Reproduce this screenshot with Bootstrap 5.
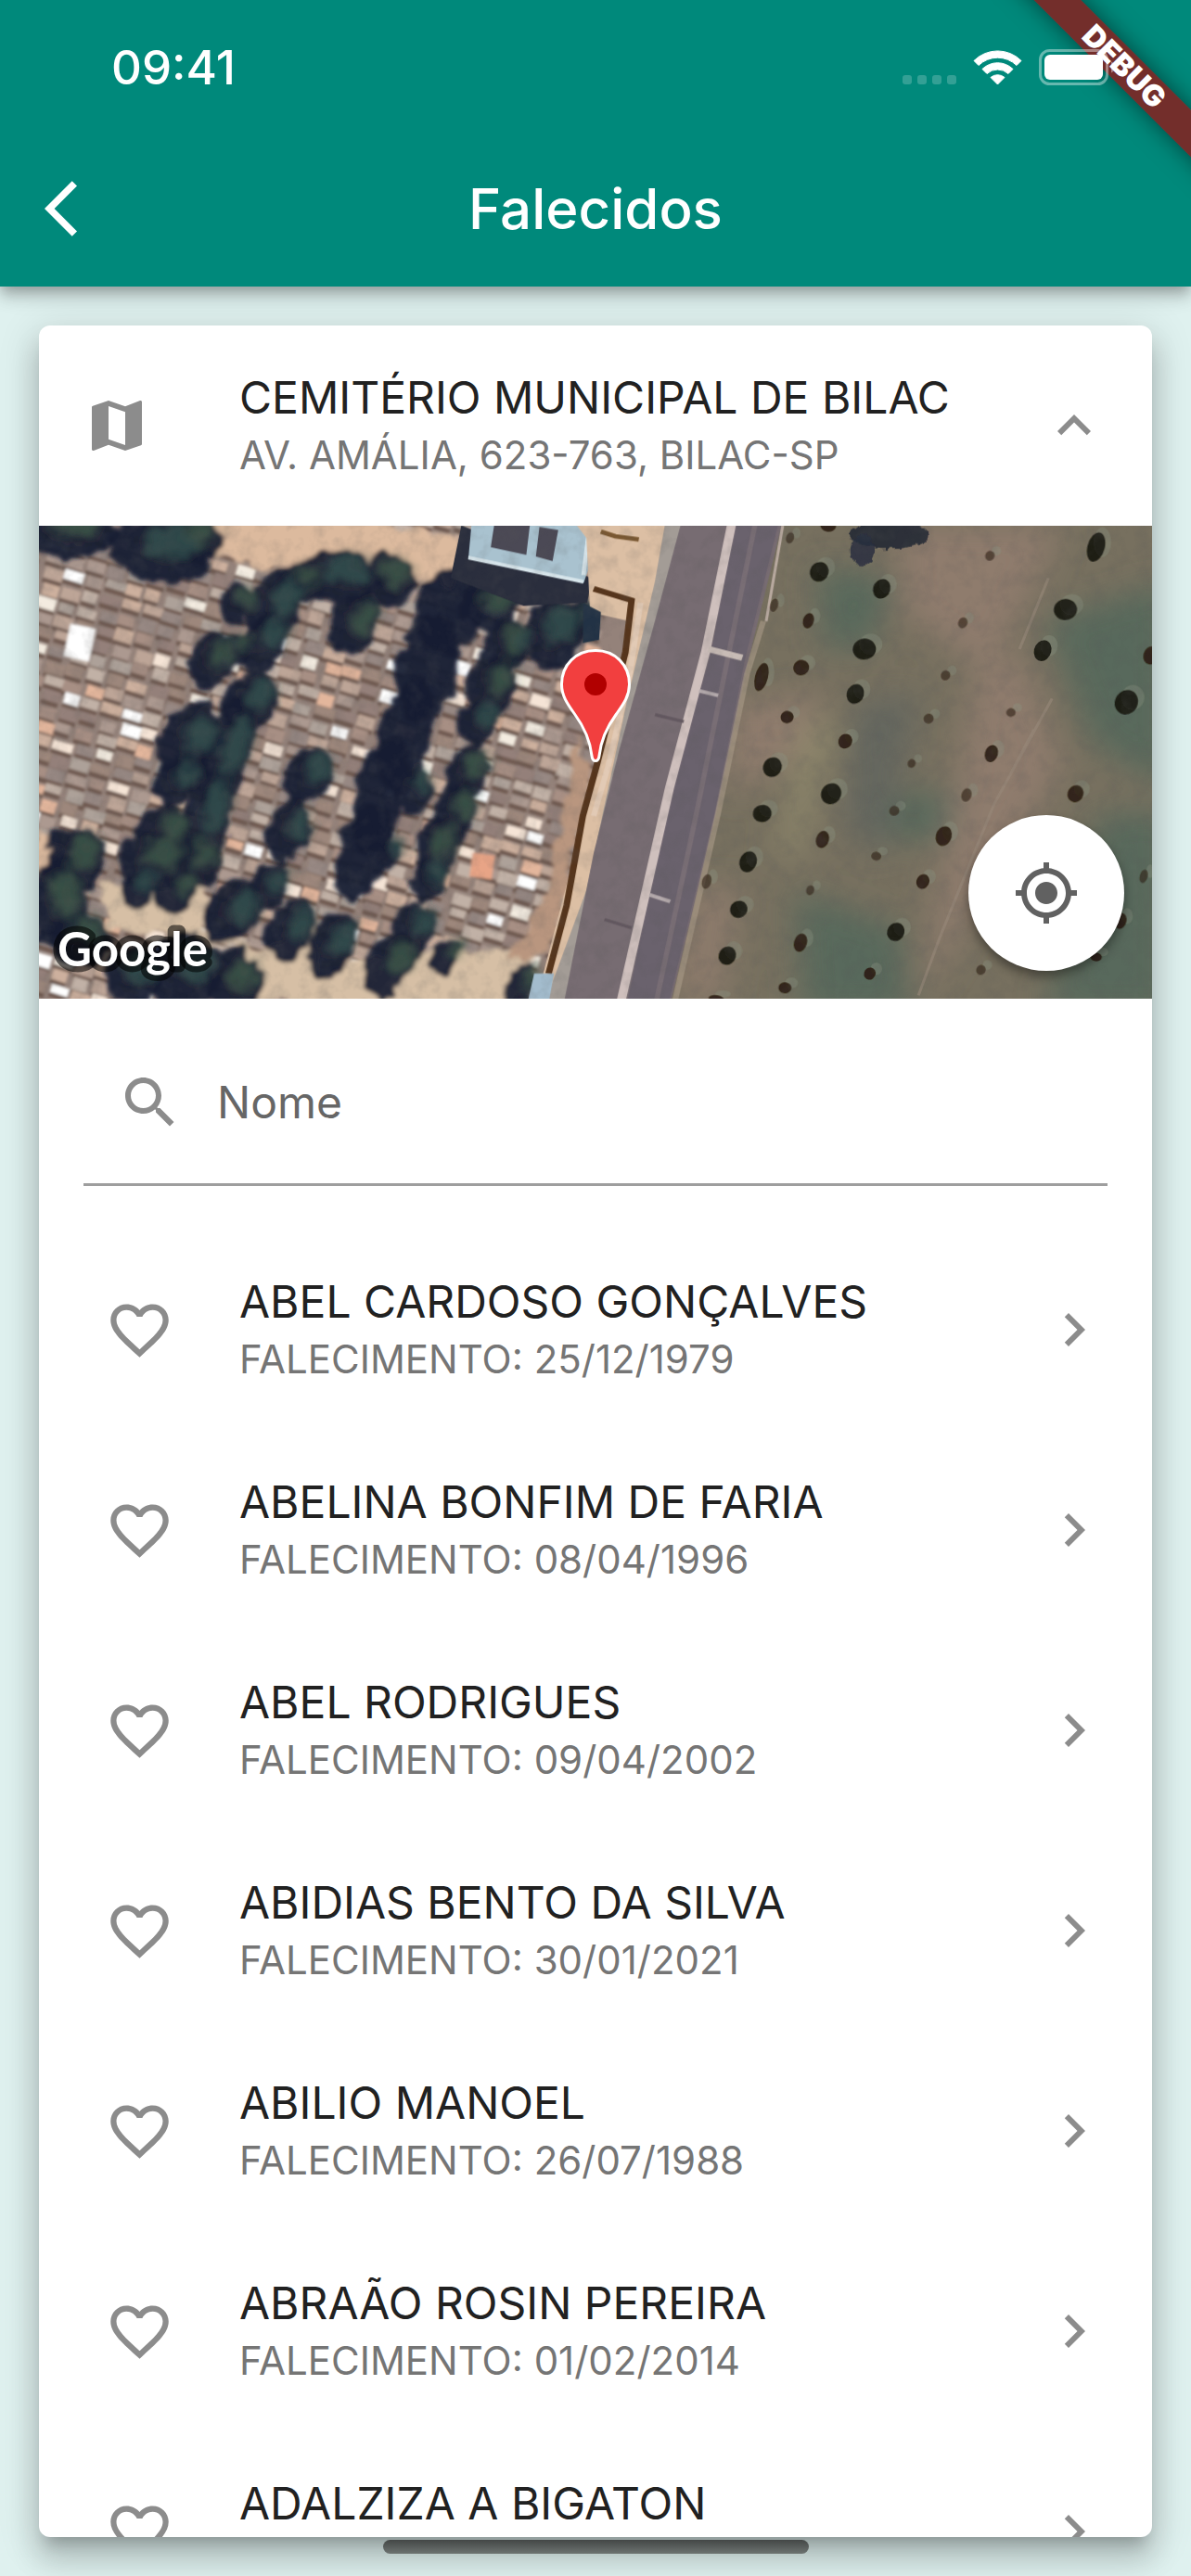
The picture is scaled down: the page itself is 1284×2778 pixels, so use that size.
<!DOCTYPE html>
<html lang="pt-BR">
<head>
<meta charset="utf-8">
<meta name="viewport" content="width=device-width, initial-scale=1">
<title>Falecidos</title>
<link href="https://cdn.jsdelivr.net/npm/bootstrap@5.3.0/dist/css/bootstrap.min.css" rel="stylesheet">
<style>
  body { font-family: Inter, "Liberation Sans", sans-serif; background: #dff1ef; color: #212121; }
  .topbar { background: #00897b; color: #fff; z-index: 2;
    box-shadow: 0 6px 12px -3px rgba(0,0,0,.2), 0 12px 15px rgba(0,0,0,.14), 0 3px 30px rgba(0,0,0,.12); }
  .statusbar { height: 141px; padding: 24px 82px 24px 120px; z-index: 4; }
  .clock { font-size: 51px; line-height: 98px; font-weight: 500; }
  .titlebar { height: 168px; padding: 0 48px; }
  .titlebar h1 { font-size: 60px; line-height: 72px; font-weight: 500; }
  .side-slot { width: 72px; }
  .bare { border: 0; background: none; padding: 0; color: inherit; }
  .ribbon { top: 54px; right: -128px; width: 400px; height: 36px; transform: rotate(45deg);
    background: rgba(148,20,20,.78); box-shadow: 0 0 26px rgba(0,0,0,.5);
    font-size: 32px; line-height: 36px; font-weight: 900; color: #fff; z-index: 3; }
  .page { padding: 42px; min-height: 0; }
  .sheet { border: 0; border-radius: 12px; min-height: 0;
    box-shadow: 0 15px 15px -9px rgba(0,0,0,.2), 0 24px 30px 3px rgba(0,0,0,.14), 0 9px 42px 6px rgba(0,0,0,.12); }
  .sheet-inner { border-radius: 12px; min-height: 0; }
  .tile { height: 216px; padding: 0 48px; flex: none; }
  .lead-slot { width: 168px; flex: none; }
  .heart-btn { width: 120px; height: 120px; }
  .icon-gray { color: #8c8c8c; }
  .tile-title { font-size: 48px; line-height: 63px; color: #212121; }
  .tile-sub { font-size: 42px; line-height: 61px; color: #757575; }
  .map-view { height: 510px; flex: none; }
  .locate { width: 168px; height: 168px; right: 30px; bottom: 30px; background: #fff; color: #616161;
    box-shadow: 0 6px 12px rgba(0,0,0,.4); }
  .pin { left: 50%; top: 133px; margin-left: -38px; }
  .search-wrap { padding: 24px 48px 47px; flex: none; }
  .search-line { height: 178px; border-bottom: 3px solid #9e9e9e; padding: 0 36px; gap: 36px; }
  .search-line input { border: 0; outline: 0; background: none; font-size: 48px; line-height: 60px; color: #212121; padding: 0; }
  .search-line input::placeholder { color: #666; opacity: 1; }
  .home-bar { width: 459px; height: 15px; border-radius: 8px; bottom: 24px; left: 50%; margin-left: -229px;
    background: linear-gradient(#434746, #6d7371); z-index: 3; }
</style>
</head>
<body>
<svg width="0" height="0" class="position-absolute" aria-hidden="true">
  <symbol id="i-heart" viewBox="0 0 24 24"><path fill="currentColor" d="M16.5 3c-1.74 0-3.41.81-4.5 2.09C10.91 3.81 9.24 3 7.5 3 4.42 3 2 5.42 2 8.5c0 3.78 3.4 6.86 8.55 11.54L12 21.35l1.45-1.32C18.6 15.36 22 12.28 22 8.5 22 5.42 19.58 3 16.5 3zm-4.4 15.55l-.1.1-.1-.1C7.14 14.24 4 11.39 4 8.5 4 6.5 5.5 5 7.5 5c1.54 0 3.04.99 3.57 2.36h1.87C13.46 5.99 14.96 5 16.5 5c2 0 3.5 1.5 3.5 3.5 0 2.89-3.14 5.74-7.9 10.05z"/></symbol>
  <symbol id="i-next" viewBox="0 0 24 24"><path fill="currentColor" d="M10 6L8.59 7.41 13.17 12l-4.58 4.59L10 18l6-6z"/></symbol>
</svg>

<div class="vh-100 d-flex flex-column position-relative overflow-hidden">
  <header class="topbar position-relative">
    <div class="statusbar position-relative d-flex align-items-start justify-content-between">
      <span class="clock">09:41</span>
      <svg width="231" height="54" viewBox="0 0 231 54" class="mt-4" aria-label="Wi-Fi e bateria" fill="#fff">
        <g fill-opacity=".2"><rect x="2" y="33" width="10" height="10" rx="3"/><rect x="18" y="33" width="10" height="10" rx="3"/><rect x="34" y="33" width="10" height="10" rx="3"/><rect x="50" y="33" width="10" height="10" rx="3"/></g>
        <path d="M79 17.500a36 36 0 0 1 51 0l-5 5a29.500 29.500 0 0 0-41 0z" stroke="#fff" stroke-width="1" stroke-linejoin="round"/>
        <path d="M88 26.500a23.500 23.500 0 0 1 33 0l-5 5a17 17 0 0 0-23 0z" stroke="#fff" stroke-width="1" stroke-linejoin="round"/>
        <path d="M97 35.500a11.500 11.500 0 0 1 15 0l-7.500 7.500z" stroke="#fff" stroke-width="1" stroke-linejoin="round"/>
        <rect x="150.500" y="6.500" width="72" height="36" rx="10" fill="none" stroke="#fff" stroke-opacity=".4" stroke-width="3"/>
        <rect x="155" y="11" width="63" height="27" rx="6"/>
        <path d="M227 18.500c5 2 5 10 0 12z" fill-opacity=".4"/>
      </svg>
    </div>
    <div class="titlebar d-flex align-items-center justify-content-between">
      <button class="bare side-slot text-start" type="button" aria-label="Voltar">
        <svg width="36" height="72" viewBox="0 0 12 24" class="d-block"><path fill="#fff" d="M11.670 3.870L9.900 2.100 0 12l9.900 9.900 1.770-1.770L3.540 12z"/></svg>
      </button>
      <h1 class="m-0">Falecidos</h1>
      <span class="side-slot"></span>
    </div>
    <div class="ribbon position-absolute text-center">DEBUG</div>
  </header>

  <main class="page flex-fill d-flex flex-column">
    <section class="card sheet flex-fill">
      <div class="sheet-inner overflow-hidden d-flex flex-column flex-fill">
        <div class="tile d-flex align-items-center">
          <div class="lead-slot icon-gray"><svg width="72" height="72" viewBox="0 0 24 24" class="d-block"><path fill="currentColor" d="M20.500 3l-.16.03L15 5.100 9 3 3.360 4.900c-.21.07-.36.25-.36.48V20.500c0 .28.22.5.5.5l.16-.03L9 18.900l6 2.100 5.640-1.900c.21-.07.36-.25.36-.48V3.500c0-.28-.22-.5-.5-.5zM15 19l-6-2.110V5l6 2.110V19z"/></svg></div>
          <div class="flex-fill"><div class="tile-title">CEMITÉRIO MUNICIPAL DE BILAC</div><div class="tile-sub">AV. AMÁLIA, 623-763, BILAC-SP</div></div>
          <button class="bare icon-gray" type="button" aria-label="Recolher mapa"><svg width="72" height="72" viewBox="0 0 24 24" class="d-block"><path fill="currentColor" d="M12 8l-6 6 1.410 1.410L12 10.830l4.590 4.580L18 14z"/></svg></button>
        </div>

        <div class="map-view position-relative overflow-hidden">
          <svg class="d-block w-100 h-100" viewBox="0 0 1200 510" preserveAspectRatio="xMidYMid slice" role="img" aria-label="Imagem de satélite do cemitério">
            <defs>
              <filter id="leafy" x="-5%" y="-5%" width="110%" height="110%"><feTurbulence type="fractalNoise" baseFrequency=".05" numOctaves="2" seed="4" result="n"/><feDisplacementMap in="SourceGraphic" in2="n" scale="20" xChannelSelector="R" yChannelSelector="G"/><feGaussianBlur stdDeviation="2"/></filter>
              <filter id="soft"><feGaussianBlur stdDeviation="1.600"/></filter>
              <filter id="glow"><feGaussianBlur stdDeviation="12"/></filter>
              <filter id="haze" x="-20%" y="-20%" width="140%" height="140%"><feGaussianBlur stdDeviation="48"/></filter>
              <filter id="grain" x="0" y="0" width="100%" height="100%"><feTurbulence type="fractalNoise" baseFrequency=".06" numOctaves="3" seed="9"/><feColorMatrix values="0 0 0 0 .1  0 0 0 0 .1  0 0 0 0 .1  1.600 0 0 0 -.68"/></filter>
            </defs>
            <rect width="1200" height="510" fill="#94827a"/>
            <g id="tombs" filter="url(#soft)"></g>
            <g filter="url(#leafy)">
              <g transform="translate(-2 -7) scale(.3827 .3333)">
                <path fill="#dcba9e" d="M480 0H900L1200 60 1180 220 1060 190 850 110 640 170 560 130 500 110z"/>
                <path fill="#d6bfa5" d="M190 1180L480 1200 460 1330 640 1400 780 1300 800 1480 930 1420 1110 1400 1400 1390 1340 1580 620 1560 560 1380 200 1320z"/>
                <path fill="#dcba9e" d="M0 1010L60 1060 0 1180z"/>
                <path fill="#b9967f" d="M1520 700L1560 820 1470 1300 1450 1400 1330 1430 1440 1180z"/>
              </g>
              <g id="canopy" transform="translate(-2 -7) scale(.3827 .3333)"></g>
            </g>
            <g transform="translate(-2 -7) scale(.3827 .3333)" filter="url(#soft)">
              <path fill="#292d3c" d="M1195 20L1165 190 1370 280 1550 270 1560 190z"/>
              <path fill="#a9c2cf" d="M1225 0H1600L1540 205 1215 125z"/>
              <path fill="#d8e6ec" d="M1215 118L1540 196 1538 208 1214 130zM1550 20h12L1545 180h-12z"/>
              <path fill="#4b4855" d="M1290 0H1390L1378 115 1278 90zM1415 25L1468 35 1452 135 1405 120z"/>
            </g>
            <g transform="translate(598 -7) scale(.3891 .3333)">
              <path fill="#77705f" d="M515 0H1600V1600H200L340 950 430 450z"/>
              <g filter="url(#haze)">
                <path fill="#59695c" d="M620 150L840 200 760 420 640 420zM1250 330L1600 200 1600 880 1380 720zM560 1200L860 1330 880 1600 580 1600zM820 900L1080 860 1040 1060 800 1020zM1400 950L1600 950 1600 1600 1250 1600z"/>
                <path fill="#8f7b6d" d="M840 20L1300 20 1100 500 860 300zM1060 480L1190 440 1300 800 1040 1300 900 1560 1000 900zM380 600L640 560 560 760 380 900zM280 1200L400 1180 350 1560 230 1560z"/>
                <path fill="#63665f" d="M720 600L900 560 800 1100 700 1000z"/>
                <path fill="#8f886c" d="M580 660L680 640 570 1100 510 1100z"/>
              </g>
              <g filter="url(#soft)">
                <path fill="#dcbfa4" d="M-60 0H260L170 350 70 750 -80 1560 -160 1560 0 850 100 330 -10 300 -20 60z"/>
                <path fill="#a39c96" d="M200 0H250L160 400 60 850 -70 1580 -140 1580 -20 1200 90 600 170 200z"/>
                <path fill="#776c72" d="M245 0H525L430 450 340 950 210 1580H-85L0 1080 70 750 165 350z"/>
                <path fill="#6b626d" d="M395 0H515L420 450 335 950 205 1580H90L215 870 325 430z"/>
                <path fill="none" stroke="#82777c" stroke-width="14" opacity=".6" d="M450 0L375 430 285 950 170 1580"/>
                <path fill="none" stroke="#cfc0bd" stroke-width="25" d="M385 0L310 430 210 870 72 1580"/>
                <path fill="none" stroke="#b9aaa0" stroke-width="8" d="M524 20L478 330"/>
                <path fill="none" stroke="#a49583" stroke-width="16" opacity=".7" d="M470 330L425 500 345 950 225 1560"/>
                <path fill="none" stroke="#c8bcb6" stroke-width="20" d="M318 420L412 448"/>
                <path fill="none" stroke="#b5abad" stroke-width="12" d="M292 555L345 570M155 1215L212 1237"/>
                <path fill="none" stroke="#5e545b" stroke-width="10" opacity=".8" d="M170 632L250 655M30 1295L105 1322"/>
                <path fill="none" stroke="#57361c" stroke-width="18" d="M0 225L105 262 88 430 10 790 -30 960 -75 1250 -125 1470"/>
                <path fill="none" stroke="#7a5830" stroke-width="14" d="M20 40L60 55 125 65"/>
                <path fill="none" stroke="#e2cab5" stroke-width="16" d="M130 270L100 500 40 800 0 960"/>
                <path fill="#233344" d="M-30 270L20 300 15 390 -30 400z"/>
                <path fill="#a3bccd" d="M-165 1470L-110 1470 -130 1600H-190z"/>
                <path fill="none" stroke="#98897a" stroke-width="8" opacity=".6" d="M1260 190L1180 420M1270 580L1110 920 960 1350 900 1540M1220 680L1130 880"/>
              </g>
              <g id="bushes" filter="url(#soft)"></g>
            </g>
            <rect width="1200" height="510" filter="url(#grain)" opacity=".25"/>
            <text x="20" y="475" font-family="Lato, sans-serif" font-size="51" font-weight="700" fill="#fff" stroke="#000" stroke-opacity=".55" stroke-width="13" stroke-linejoin="round" paint-order="stroke">Google</text>
          </svg>
          <svg class="pin position-absolute" width="76" height="122" viewBox="0 0 76 122" aria-label="Local">
            <path d="M38 1.500C17 1.500 1.500 17 1.500 38c0 13 7 22 14 32C25 83 32 96 34 115c.4 4 1.600 5.500 4 5.500s3.600-1.500 4-5.500c2-19 9-32 18.500-45 7-10 14-19 14-32C74.500 17 59 1.500 38 1.500z" fill="#f23f3f" stroke="#fff" stroke-width="3"/>
            <circle cx="38" cy="38" r="12" fill="#b10000"/>
          </svg>
          <button class="locate bare rounded-circle position-absolute d-flex align-items-center justify-content-center" type="button" aria-label="Minha localização">
            <svg width="72" height="72" viewBox="0 0 24 24"><path fill="currentColor" d="M12 8c-2.210 0-4 1.790-4 4s1.790 4 4 4 4-1.790 4-4-1.790-4-4-4zm8.940 3c-.46-4.170-3.770-7.480-7.940-7.940V1h-2v2.060C6.830 3.520 3.520 6.830 3.060 11H1v2h2.060c.46 4.170 3.770 7.480 7.940 7.940V23h2v-2.060c4.170-.46 7.480-3.770 7.940-7.940H23v-2h-2.060zM12 19c-3.870 0-7-3.130-7-7s3.130-7 7-7 7 3.130 7 7-3.130 7-7 7z"/></svg>
          </button>
        </div>

        <div class="search-wrap">
          <div class="search-line d-flex align-items-center">
            <label for="nome" class="icon-gray" aria-label="Nome"><svg width="72" height="72" viewBox="0 0 24 24" class="d-block"><path fill="currentColor" d="M15.500 14h-.79l-.28-.27C15.410 12.590 16 11.110 16 9.500 16 5.910 13.090 3 9.500 3S3 5.910 3 9.500 5.910 16 9.500 16c1.610 0 3.090-.59 4.230-1.570l.27.28v.79l5 4.990L20.490 19l-4.990-5zm-6 0C7.010 14 5 11.990 5 9.500S7.010 5 9.500 5 14 7.010 14 9.500 11.990 14 9.500 14z"/></svg></label>
            <input id="nome" type="text" class="flex-fill" placeholder="Nome">
          </div>
        </div>

        <div class="tile d-flex align-items-center">
          <div class="lead-slot"><button class="bare heart-btn icon-gray" type="button" aria-label="Favoritar"><svg width="75" height="75"><use href="#i-heart"/></svg></button></div>
          <a href="#" class="flex-fill d-flex align-items-center text-decoration-none"><span class="flex-fill"><span class="tile-title d-block">ABEL CARDOSO GONÇALVES</span><span class="tile-sub d-block">FALECIMENTO: 25/12/1979</span></span><svg class="icon-gray" width="72" height="72"><use href="#i-next"/></svg></a>
        </div>
        <div class="tile d-flex align-items-center">
          <div class="lead-slot"><button class="bare heart-btn icon-gray" type="button" aria-label="Favoritar"><svg width="75" height="75"><use href="#i-heart"/></svg></button></div>
          <a href="#" class="flex-fill d-flex align-items-center text-decoration-none"><span class="flex-fill"><span class="tile-title d-block">ABELINA BONFIM DE FARIA</span><span class="tile-sub d-block">FALECIMENTO: 08/04/1996</span></span><svg class="icon-gray" width="72" height="72"><use href="#i-next"/></svg></a>
        </div>
        <div class="tile d-flex align-items-center">
          <div class="lead-slot"><button class="bare heart-btn icon-gray" type="button" aria-label="Favoritar"><svg width="75" height="75"><use href="#i-heart"/></svg></button></div>
          <a href="#" class="flex-fill d-flex align-items-center text-decoration-none"><span class="flex-fill"><span class="tile-title d-block">ABEL RODRIGUES</span><span class="tile-sub d-block">FALECIMENTO: 09/04/2002</span></span><svg class="icon-gray" width="72" height="72"><use href="#i-next"/></svg></a>
        </div>
        <div class="tile d-flex align-items-center">
          <div class="lead-slot"><button class="bare heart-btn icon-gray" type="button" aria-label="Favoritar"><svg width="75" height="75"><use href="#i-heart"/></svg></button></div>
          <a href="#" class="flex-fill d-flex align-items-center text-decoration-none"><span class="flex-fill"><span class="tile-title d-block">ABIDIAS BENTO DA SILVA</span><span class="tile-sub d-block">FALECIMENTO: 30/01/2021</span></span><svg class="icon-gray" width="72" height="72"><use href="#i-next"/></svg></a>
        </div>
        <div class="tile d-flex align-items-center">
          <div class="lead-slot"><button class="bare heart-btn icon-gray" type="button" aria-label="Favoritar"><svg width="75" height="75"><use href="#i-heart"/></svg></button></div>
          <a href="#" class="flex-fill d-flex align-items-center text-decoration-none"><span class="flex-fill"><span class="tile-title d-block">ABILIO MANOEL</span><span class="tile-sub d-block">FALECIMENTO: 26/07/1988</span></span><svg class="icon-gray" width="72" height="72"><use href="#i-next"/></svg></a>
        </div>
        <div class="tile d-flex align-items-center">
          <div class="lead-slot"><button class="bare heart-btn icon-gray" type="button" aria-label="Favoritar"><svg width="75" height="75"><use href="#i-heart"/></svg></button></div>
          <a href="#" class="flex-fill d-flex align-items-center text-decoration-none"><span class="flex-fill"><span class="tile-title d-block">ABRAÃO ROSIN PEREIRA</span><span class="tile-sub d-block">FALECIMENTO: 01/02/2014</span></span><svg class="icon-gray" width="72" height="72"><use href="#i-next"/></svg></a>
        </div>
        <div class="tile d-flex align-items-center">
          <div class="lead-slot"><button class="bare heart-btn icon-gray" type="button" aria-label="Favoritar"><svg width="75" height="75"><use href="#i-heart"/></svg></button></div>
          <a href="#" class="flex-fill d-flex align-items-center text-decoration-none"><span class="flex-fill"><span class="tile-title d-block">ADALZIZA A BIGATON</span><span class="tile-sub d-block">&nbsp;</span></span><svg class="icon-gray" width="72" height="72"><use href="#i-next"/></svg></a>
        </div>
      </div>
    </section>
  </main>
  <div class="home-bar position-absolute"></div>
</div>

<script src="https://cdn.jsdelivr.net/npm/bootstrap@5.3.0/dist/js/bootstrap.bundle.min.js"></script>
<script>
  // Aerial view: graves on a slanted grid, tree crowns with their shadows, bushes in the field.
  let seed = 17;
  const rnd = () => (seed = (seed * 16807) % 2147483647) / 2147483647;
  const put = (id, html) => { document.getElementById(id).innerHTML = html; };

  const stone = ['#ac9990', '#978883', '#bda597', '#9d877b', '#ada199', '#94807a', '#c1b1a6', '#a78f84', '#cdb09e'];
  const bright = ['#ffffff', '#f5e4d6', '#e3b69c', '#f3ebe0'];
  let s = '';
  for (let r = -12; r < 40; r++) for (let c = -2; c < 32; c++) {
    const x = c * 22 - r * 3 + rnd() * 5, y = r * 16 + c * 5 + rnd() * 4 - 60;
    if (x > 600 || y > 520 || y < -20) continue;
    const pal = rnd() < .16 ? bright : stone, w = 16 + rnd() * 7, h = 9 + rnd() * 5;
    s += `<g transform="translate(${x.toFixed()} ${y.toFixed()}) rotate(17)"><rect y="3" width="${w.toFixed()}" height="${(h + 2).toFixed()}" fill="#6e594f"/><rect width="${w.toFixed()}" height="${h.toFixed()}" fill="${pal[Math.floor(rnd() * pal.length)]}"/></g>`;
  }
  s += '<rect x="30" y="108" width="28" height="36" fill="#fff" transform="rotate(12 44 126)"/><rect x="466" y="354" width="24" height="26" fill="#e8a486" transform="rotate(8 478 366)"/>';
  put('tombs', s);

  // x, y, rx, ry, rotation
  const crowns = [[90,50,140,80,0],[350,100,150,110,10],[440,70,90,80,0],[670,280,80,110,20],[640,400,60,110,15],[740,210,70,60,0],[850,190,130,90,10],[990,200,80,90,0],[890,340,70,110,20],
    [490,460,60,100,10],[560,270,50,70,20],[560,430,50,60,0],[600,590,80,100,20],[430,720,90,130,20],[530,760,70,200,15],[390,850,60,90,20],[360,1010,80,90,20],[480,960,70,170,10],[110,1100,90,110,0],[60,1240,80,160,0],
    [330,1110,110,100,0],[280,1200,50,70,15],[390,1200,60,80,20],[450,1110,70,90,0],[760,830,70,100,15],[710,1010,65,110,15],[650,1190,60,90,20],[550,1270,80,110,25],[710,1330,70,100,25],[830,1380,65,120,20],[990,1440,70,110,25],[1060,1330,60,90,10],
    [1160,300,100,150,10],[1100,480,90,190,12],[1040,700,75,200,12],[970,890,75,200,12],[920,1080,75,170,12],[1280,280,90,90,0],[1320,420,70,90,10],[1280,540,75,110,10],[1240,660,55,80,10],[1210,820,60,90,10],[1180,950,60,110,10],[1120,1070,60,110,10],[1100,1170,50,80,10],[1450,370,90,120,10],[1530,330,50,70,0],[1060,880,50,70,0],
    [270,1480,90,100,0],[420,1460,110,130,0],[560,1500,80,120,0],[120,1360,90,90,0],[1150,1420,40,60,10],[1360,1510,40,90,15],[990,1090,40,50,0],[1350,420,40,60,0]];
  const ell = (e, fill, k, dx, dy, o) => `<ellipse cx="${e[0] + dx}" cy="${e[1] + dy}" rx="${Math.round(e[2] * k)}" ry="${Math.round(e[3] * k)}" transform="rotate(${e[4]} ${e[0]} ${e[1]})" fill="${fill}" opacity="${o}"/>`;
  put('canopy', crowns.map(e => ell(e, '#181d32', .96, 0, 0, .95)).join('') + '<g filter="url(#glow)">' +
    crowns.filter((e, i) => i < 32 || i > 36).map(e => ell(e, rnd() < .5 ? '#3d5548' : '#34504e', .52, 22, -30, .85)).join('') + '</g>');

  // x, y, rx, ry
  const bushes = [[625,170,26,32],[798,225,24,32],[595,328,15,25],[750,420,32,34],[575,480,22,25],[725,565,24,32],[536,640,18,20],[697,718,19,24],[495,802,26,32],[658,888,28,34],[467,952,26,28],[634,1036,18,28],[428,1108,24,34],[402,1262,24,28],[370,1412,24,30],[573,1370,18,30],[765,1470,16,20],[837,1335,24,30],[970,1025,22,32],[912,1172,18,24],[1033,892,14,22],[1102,758,18,28],[1335,888,22,28],[1476,592,32,40],[1307,292,32,34],[1244,425,24,34],[1392,90,24,48],[1098,118,13,16],[1023,335,13,18],[975,505,13,16],[928,645,14,16],[881,790,11,14],[833,943,14,16],[783,1090,14,14],[600,1200,11,16],[313,1172,13,24],[465,510,18,46],[544,60,11,18],[500,278,11,22],[1156,625,13,14],[1545,440,22,30],[1524,1155,11,22],[1073,1458,13,16],[530,1516,18,18],[650,20,22,20],[1460,1300,16,26],[1392,1416,16,14],[340,1552,22,12]];
  put('bushes', bushes.map(b => `<ellipse cx="${b[0] + 18}" cy="${b[1] - 16}" rx="${b[2]}" ry="${b[3]}" fill="#8b9480" opacity=".35"/><ellipse cx="${b[0]}" cy="${b[1]}" rx="${b[2]}" ry="${b[3]}" transform="rotate(12 ${b[0]} ${b[1]})" fill="${b[2] > 22 ? '#1a1a12' : '#2e2014'}" opacity="${b[2] < 15 ? .6 : .92}"/>`).join('') +
    '<g filter="url(#leafy)"><ellipse cx="820" cy="50" rx="110" ry="46" fill="#222734" opacity=".9"/><ellipse cx="745" cy="100" rx="34" ry="50" fill="#2a3040" opacity=".85"/></g>');
</script>
</body>
</html>
